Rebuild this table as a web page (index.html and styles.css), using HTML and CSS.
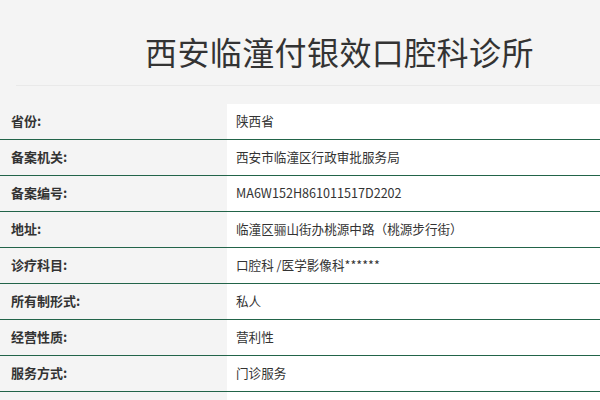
FILE: index.html
```html
<!DOCTYPE html>
<html lang="zh-CN">
<head>
<meta charset="utf-8">
<title>西安临潼付银效口腔科诊所</title>
<link rel="stylesheet" href="styles.css">
</head>
<body>
<div class="page">
  <header class="head">
    <h1 class="title">西安临潼付银效口腔科诊所</h1>
  </header>
  <div class="rule"></div>
  <table class="info">
    <tr><th>省份:</th><td>陕西省</td></tr>
    <tr><th>备案机关:</th><td>西安市临潼区行政审批服务局</td></tr>
    <tr><th>备案编号:</th><td>MA6W152H861011517D2202</td></tr>
    <tr><th>地址:</th><td>临潼区骊山街办桃源中路（桃源步行街）</td></tr>
    <tr><th>诊疗科目:</th><td>口腔科 /医学影像科******</td></tr>
    <tr><th>所有制形式:</th><td>私人</td></tr>
    <tr><th>经营性质:</th><td>营利性</td></tr>
    <tr><th>服务方式:</th><td>门诊服务</td></tr>
  </table>
  <div class="tail"><span class="tail-label"></span><span class="tail-value"></span></div>
</div>
</body>
</html>
```
FILE: styles.css
```css
html, body {
  margin: 0;
  padding: 0;
  background: #f4f4f4;
}
body {
  font-family: "Microsoft YaHei", "Noto Sans CJK SC", "Noto Sans", sans-serif;
  color: #333;
}
.page {
  width: 600px;
  height: 400px;
  overflow: hidden;
}
.head {
  padding: 35px 0 0 145px;
}
.title {
  margin: 0;
  font-size: 32px;
  line-height: 32px;
  letter-spacing: 0.4px;
  font-weight: normal;
  color: #333;
  white-space: nowrap;
}
.rule {
  margin: 18px 0 0 16px;
  height: 1px;
  background: #e9e9e9;
}
.info {
  margin-top: 18px;
  width: 100%;
  border-collapse: collapse;
}
.info th, .info td {
  height: 35px;
  padding: 0 0 2px 0;
  box-sizing: border-box;
  border-bottom: 1px solid #226449;
  font-size: 13px;
  line-height: 33px;
  text-align: left;
  vertical-align: middle;
  white-space: nowrap;
}
.info th {
  width: 227px;
  padding-left: 11px;
  font-weight: bold;
  color: #333;
}
.info td {
  background: #fff;
  padding-left: 9px;
  font-size: 12.6px;
  color: #333;
}
.tail {
  display: flex;
  height: 20px;
}
.tail-label {
  width: 227px;
}
.tail-value {
  flex: 1;
  background: #fff;
}
```
